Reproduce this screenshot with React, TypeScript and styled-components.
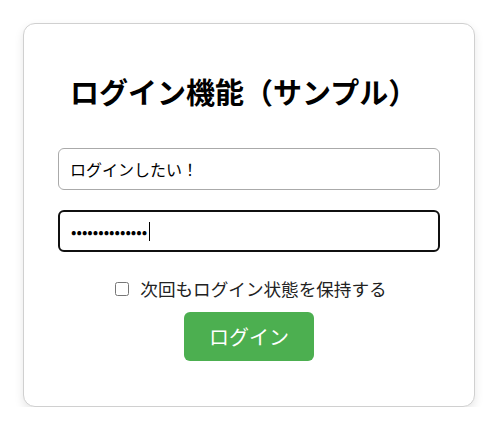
import React from "react";
import styled, { createGlobalStyle } from "styled-components";

const GlobalStyle = createGlobalStyle`
  body {
    margin: 0;
    background: #ffffff;
    font-family: "Noto Sans CJK JP", "Noto Sans", sans-serif;
  }
`;

const App: React.FC<{}> = () => {
  return (
    <PageWrapper>
      <GlobalStyle />
      <CardWrapper>
        <TitleWrapper>ログイン機能（サンプル）</TitleWrapper>
        <FormWrapper>
          <FieldWrapper>
            <TextInput type="text" defaultValue="ログインしたい！" />
          </FieldWrapper>
          <FieldWrapper>
            <TextInput
              type="password"
              defaultValue="password123456"
              autoFocus
              $active
            />
            <Caret />
          </FieldWrapper>
          <CheckRow>
            <CheckBox type="checkbox" id="keep" />
            <CheckLabel htmlFor="keep">次回もログイン状態を保持する</CheckLabel>
          </CheckRow>
          <LoginButton>ログイン</LoginButton>
        </FormWrapper>
      </CardWrapper>
    </PageWrapper>
  );
};

const PageWrapper = styled.div`
  padding: 23px 0 0 23px;
`;

const CardWrapper = styled.div`
  width: 452px;
  box-sizing: border-box;
  border: 1px solid #d0d0d0;
  border-radius: 12px;
  background: #ffffff;
  box-shadow: 0 4px 10px rgba(0, 0, 0, 0.1);
  padding: 37px 34px 45px;
  display: flex;
  flex-direction: column;
`;

const TitleWrapper = styled.h1`
  margin: 0 0 0 12px;
  font-size: 29px;
  font-weight: bold;
  color: #000000;
  line-height: 60px;
`;

const FormWrapper = styled.div`
  margin-top: 27px;
  display: flex;
  flex-direction: column;
  align-items: center;
`;

const FieldWrapper = styled.div`
  position: relative;
  width: 100%;
  margin-bottom: 20px;
`;

const TextInput = styled.input<{ $active?: boolean }>`
  display: block;
  width: 100%;
  height: 42px;
  box-sizing: border-box;
  padding: 0 11px;
  font-family: "Noto Sans CJK JP", "Noto Sans", sans-serif;
  font-size: 16px;
  color: #000000;
  border: ${(p) => (p.$active ? "2px solid #101010" : "1px solid #aaaaaa")};
  border-radius: 6px;
  outline: none;
  caret-color: transparent;
`;

const Caret = styled.span`
  position: absolute;
  left: 91px;
  top: 12px;
  width: 1px;
  height: 19px;
  background: #000000;
`;

const CheckRow = styled.div`
  display: flex;
  align-items: center;
  margin-top: 4px;
`;

const CheckBox = styled.input`
  width: 14px;
  height: 14px;
  margin: 0 11px 0 4px;
`;

const CheckLabel = styled.label`
  font-size: 17.6px;
  line-height: 26px;
  color: #222222;
`;

const LoginButton = styled.button`
  margin-top: 10px;
  width: 130px;
  height: 49px;
  border: none;
  border-radius: 6px;
  background: #4caf50;
  color: #ffffff;
  font-family: "Noto Sans CJK JP", "Noto Sans", sans-serif;
  font-size: 20px;
  cursor: pointer;
`;

export default App;
